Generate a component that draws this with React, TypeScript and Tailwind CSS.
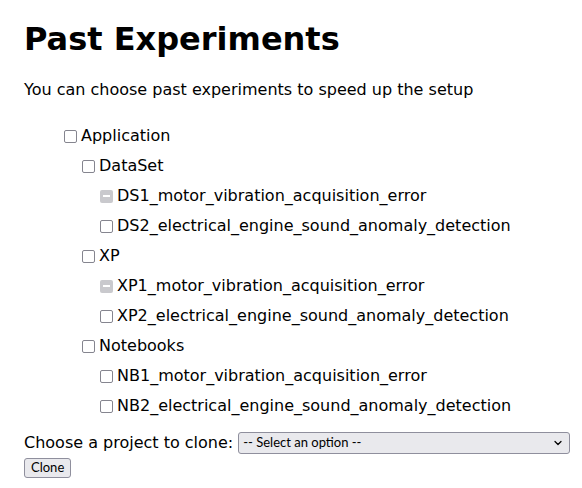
import { ChevronDown } from 'lucide-react';

type Node = {
  label: string;
  level: number;
  state?: 'mixed';
};

const rows: Node[] = [
  { label: 'Application', level: 0 },
  { label: 'DataSet', level: 1 },
  { label: 'DS1_motor_vibration_acquisition_error', level: 2, state: 'mixed' },
  { label: 'DS2_electrical_engine_sound_anomaly_detection', level: 2 },
  { label: 'XP', level: 1 },
  { label: 'XP1_motor_vibration_acquisition_error', level: 2, state: 'mixed' },
  { label: 'XP2_electrical_engine_sound_anomaly_detection', level: 2 },
  { label: 'Notebooks', level: 1 },
  { label: 'NB1_motor_vibration_acquisition_error', level: 2 },
  { label: 'NB2_electrical_engine_sound_anomaly_detection', level: 2 },
];

const indent = ['pl-[40px]', 'pl-[58px]', 'pl-[76px]'];

function Box({ mixed }: { mixed?: boolean }) {
  if (mixed) {
    return (
      <span className="flex h-[13px] w-[13px] shrink-0 items-center justify-center rounded-[2px] bg-[#c9c9cd]">
        <span className="h-[2px] w-[7px] bg-white" />
      </span>
    );
  }
  return (
    <span className="h-[13px] w-[13px] shrink-0 rounded-[2px] border border-[#85858f] bg-white" />
  );
}

export default function App() {
  return (
    <div className="min-h-screen bg-white px-6 pt-[21px] text-black [font-family:'DejaVu_Sans',sans-serif]">
      <h1 className="text-[32px] leading-[37px] font-bold">Past Experiments</h1>

      <p className="mt-[22px] text-base leading-[19px]">
        You can choose past experiments to speed up the setup
      </p>

      <ul className="mt-[22px]">
        {rows.map((row) => (
          <li key={row.label} className={`flex h-[30px] items-center gap-1 text-base ${indent[row.level]}`}>
            <Box mixed={row.state === 'mixed'} />
            <span>{row.label}</span>
          </li>
        ))}
      </ul>

      <div className="mt-[10px] flex items-center gap-[5px]">
        <label className="shrink-0 whitespace-nowrap text-base">Choose a project to clone:</label>
        <div className="relative flex h-[22px] w-[332px] shrink-0 items-center rounded-[3px] border border-[#8f8f9d] bg-[#e9e9ed] pl-1 text-[13px] [font-family:Lato,sans-serif]">
          <span>-- Select an option --</span>
          <ChevronDown className="absolute right-[5px] h-[12px] w-[12px]" strokeWidth={2.5} />
        </div>
      </div>

      <button className="mt-[1px] h-[20px] rounded-[3px] border border-[#8f8f9d] bg-[#e9e9ed] px-[6px] text-[13px] leading-none [font-family:Lato,sans-serif]">
        Clone
      </button>
    </div>
  );
}
